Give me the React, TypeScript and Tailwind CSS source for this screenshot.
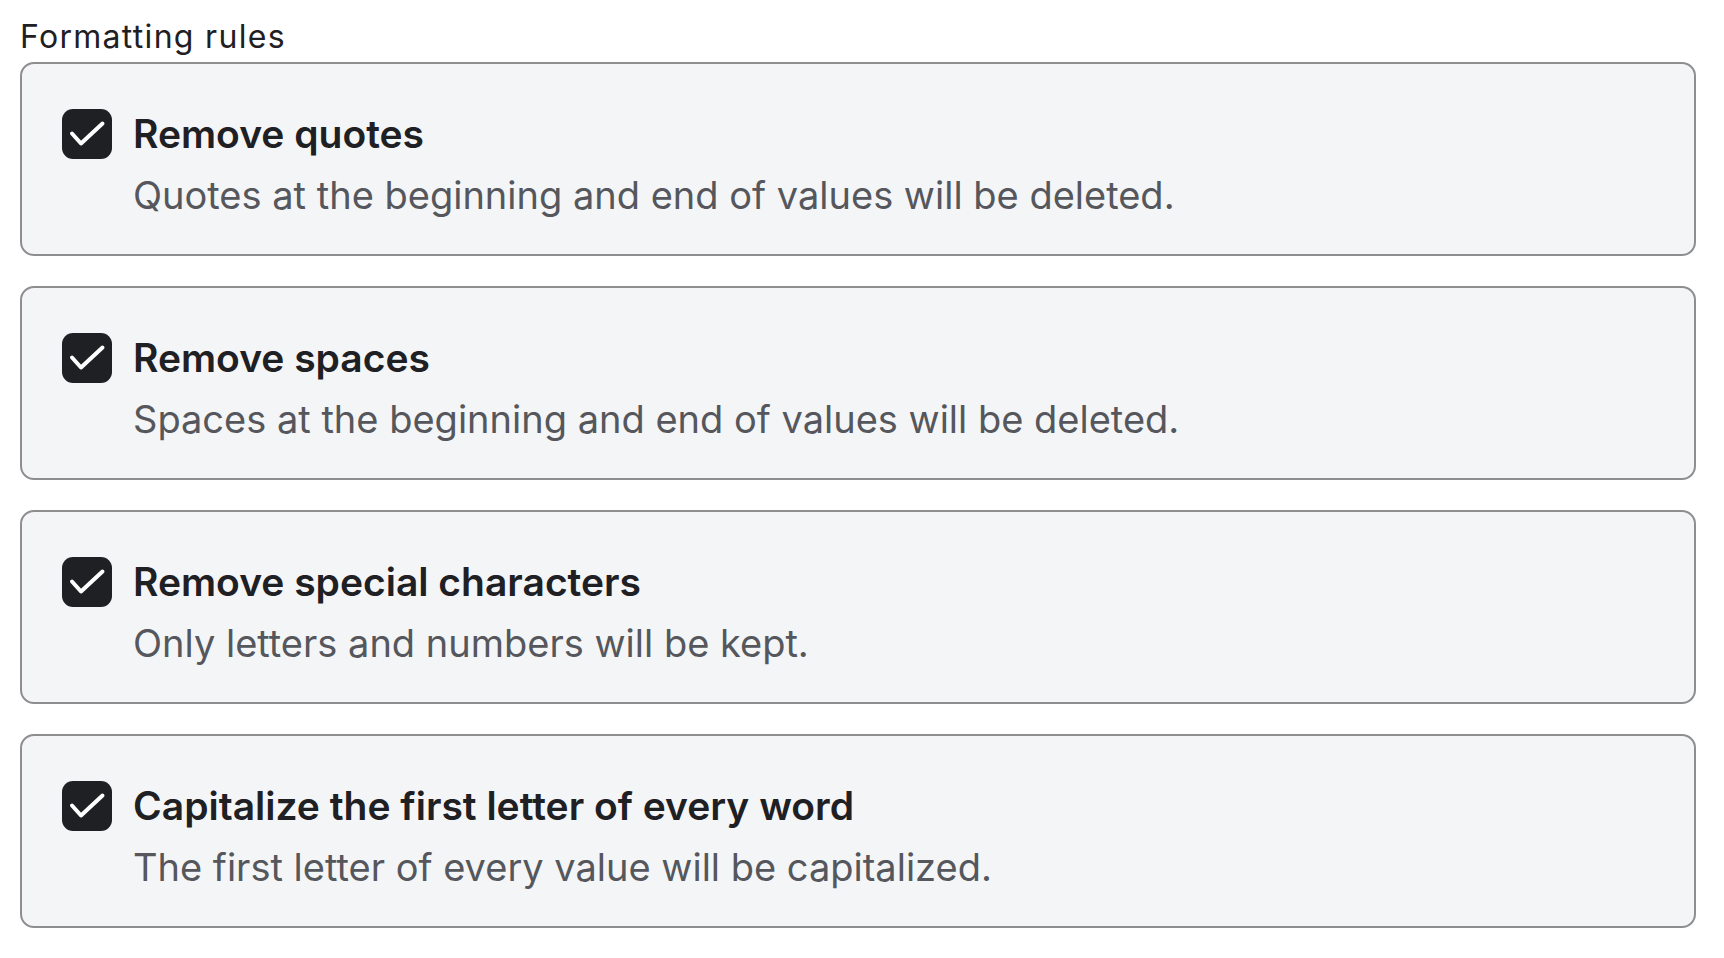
const rules = [
  {
    title: 'Remove quotes',
    description: 'Quotes at the beginning and end of values will be deleted.',
  },
  {
    title: 'Remove spaces',
    description: 'Spaces at the beginning and end of values will be deleted.',
  },
  {
    title: 'Remove special characters',
    description: 'Only letters and numbers will be kept.',
  },
  {
    title: 'Capitalize the first letter of every word',
    description: 'The first letter of every value will be capitalized.',
  },
];

function CheckBox() {
  return (
    <div className="w-[50px] h-[50px] shrink-0 rounded-[11px] bg-[#1f2023] flex items-center justify-center">
      <svg width="50" height="50" viewBox="0 0 50 50" fill="none">
        <path d="M10 24.5 L19 34.5 L40.5 14.5" stroke="#ffffff" strokeWidth="4" strokeLinecap="round" strokeLinejoin="round" />
      </svg>
    </div>
  );
}

export default function App() {
  return (
    <div className="min-h-screen bg-white px-[20px] pt-[17px] font-['Inter',sans-serif]">
      <h2 className="text-[32px] leading-[40px] tracking-[1.3px] text-[#1f2023] mb-[5px]">Formatting rules</h2>
      <div className="flex flex-col gap-[30px] w-[1676px]">
        {rules.map((rule) => (
          <label
            key={rule.title}
            className="block bg-[#f4f5f7] border-2 border-[#8e8e90] rounded-[14px] pl-[40px] pr-6 pt-[45px] pb-[35px]"
          >
            <div className="flex items-center gap-[21px]">
              <CheckBox />
              <span className="text-[39px] leading-[48px] font-semibold text-[#1f2023]">{rule.title}</span>
            </div>
            <p className="pl-[71px] mt-[12px] text-[38px] leading-[48px] text-[#55575c]">{rule.description}</p>
          </label>
        ))}
      </div>
    </div>
  );
}
